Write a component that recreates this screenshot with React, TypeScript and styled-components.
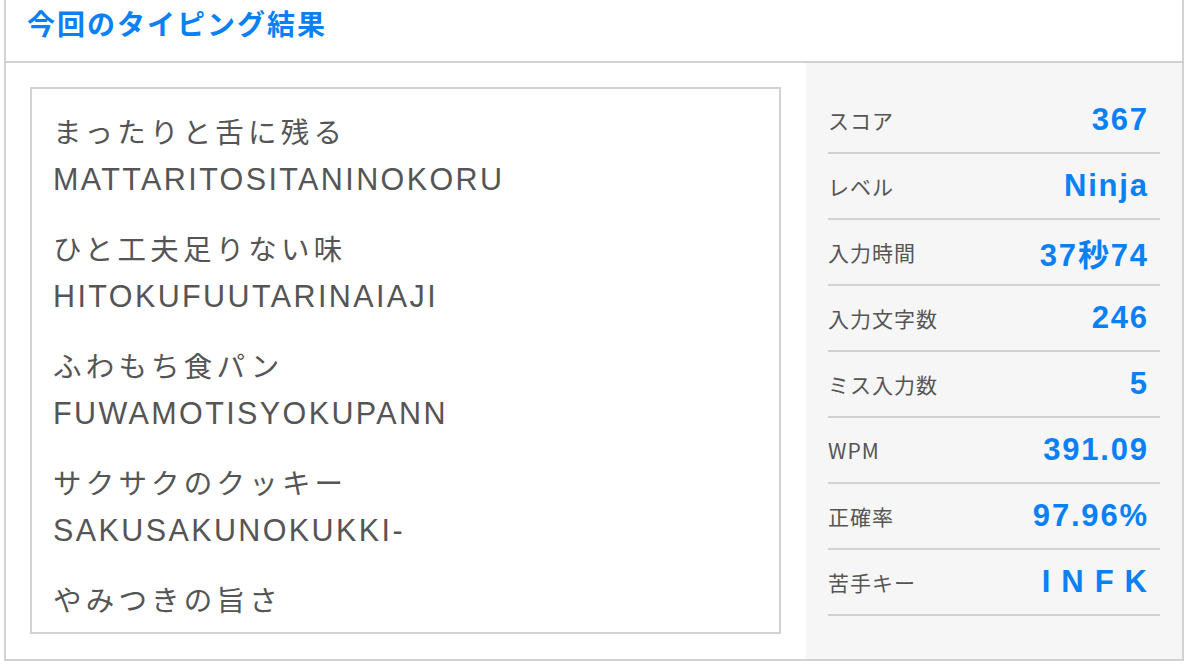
import styled, {createGlobalStyle} from "styled-components";

const GlobalStyle = createGlobalStyle`
  body {
    margin: 0;
    background: #fff;
    font-family: "Liberation Sans", "Noto Sans CJK JP", sans-serif;
  }
`

const Card = styled.section`
  margin-left: 4px;
  width: 1180px;
  box-sizing: border-box;
  border: 2px solid #d2d2d2;
  border-top: none;
`

const Header = styled.header`
  height: 63px;
  display: flex;
  align-items: center;
  padding: 0 21px 15px;
  box-sizing: border-box;
  border-bottom: 2px solid #d2d2d2;
`

const Title = styled.h2`
  margin: 0;
  color: #0a80f5;
  font-size: 28px;
  font-weight: bold;
  letter-spacing: 2px;
  font-family: "Noto Sans CJK JP", sans-serif;
`

const Body = styled.div`
  display: grid;
  grid-template-columns: 800px 1fr;
  height: 596px;
`

const LeftPane = styled.div`
  display: flex;
  flex-direction: column;
  min-height: 0;
  padding: 24px 25px 25px 24px;
`

const WordBox = styled.div`
  flex: 1;
  min-height: 0;
  box-sizing: border-box;
  border: 2px solid #d2d2d2;
  padding: 18px 21px 0;
  overflow: hidden;
`

const Word = styled.div`
  margin-bottom: 21px;
  color: #555;
  line-height: 48px;
`

const Kana = styled.div`
  font-family: "Noto Sans CJK JP", sans-serif;
  font-size: 28.5px;
  letter-spacing: 4.2px;
`

const Roma = styled.div`
  font-size: 30.5px;
  letter-spacing: 2.4px;
`

const Stats = styled.div`
  background: #f6f6f6;
  padding: 25px 22px 0;
`

const StatRow = styled.div`
  height: 64px;
  display: flex;
  align-items: center;
  justify-content: space-between;
  border-bottom: 2px solid #d2d2d2;
  padding: 0 13px 0 0;
`

const Label = styled.span`
  color: #555;
  font-size: 21px;
  letter-spacing: 1px;
  font-family: "Noto Sans CJK JP", sans-serif;
`

const Value = styled.span<{ $spread?: boolean }>`
  color: #0a80f5;
  font-size: 31px;
  font-weight: bold;
  letter-spacing: ${p => p.$spread ? "11px" : "1.8px"};
  margin-right: ${p => p.$spread ? "-11px" : "-1.8px"};
`

const words = [
    {kana: "まったりと舌に残る", roma: "MATTARITOSITANINOKORU"},
    {kana: "ひと工夫足りない味", roma: "HITOKUFUUTARINAIAJI"},
    {kana: "ふわもち食パン", roma: "FUWAMOTISYOKUPANN"},
    {kana: "サクサクのクッキー", roma: "SAKUSAKUNOKUKKI-"},
    {kana: "やみつきの旨さ", roma: ""},
]

const stats = [
    {label: "スコア", value: "367"},
    {label: "レベル", value: "Ninja"},
    {label: "入力時間", value: "37秒74"},
    {label: "入力文字数", value: "246"},
    {label: "ミス入力数", value: "5"},
    {label: "WPM", value: "391.09"},
    {label: "正確率", value: "97.96%"},
    {label: "苦手キー", value: "INFK", spread: true},
]

const App = () => {
    return (
        <>
            <GlobalStyle/>
            <Card>
                <Header>
                    <Title>今回のタイピング結果</Title>
                </Header>
                <Body>
                    <LeftPane>
                        <WordBox>
                            {words.map(w => (
                                <Word key={w.kana}>
                                    <Kana>{w.kana}</Kana>
                                    {w.roma && <Roma>{w.roma}</Roma>}
                                </Word>
                            ))}
                        </WordBox>
                    </LeftPane>
                    <Stats>
                        {stats.map(s => (
                            <StatRow key={s.label}>
                                <Label>{s.label}</Label>
                                <Value $spread={s.spread}>{s.value}</Value>
                            </StatRow>
                        ))}
                    </Stats>
                </Body>
            </Card>
        </>
    )
}

export default App
